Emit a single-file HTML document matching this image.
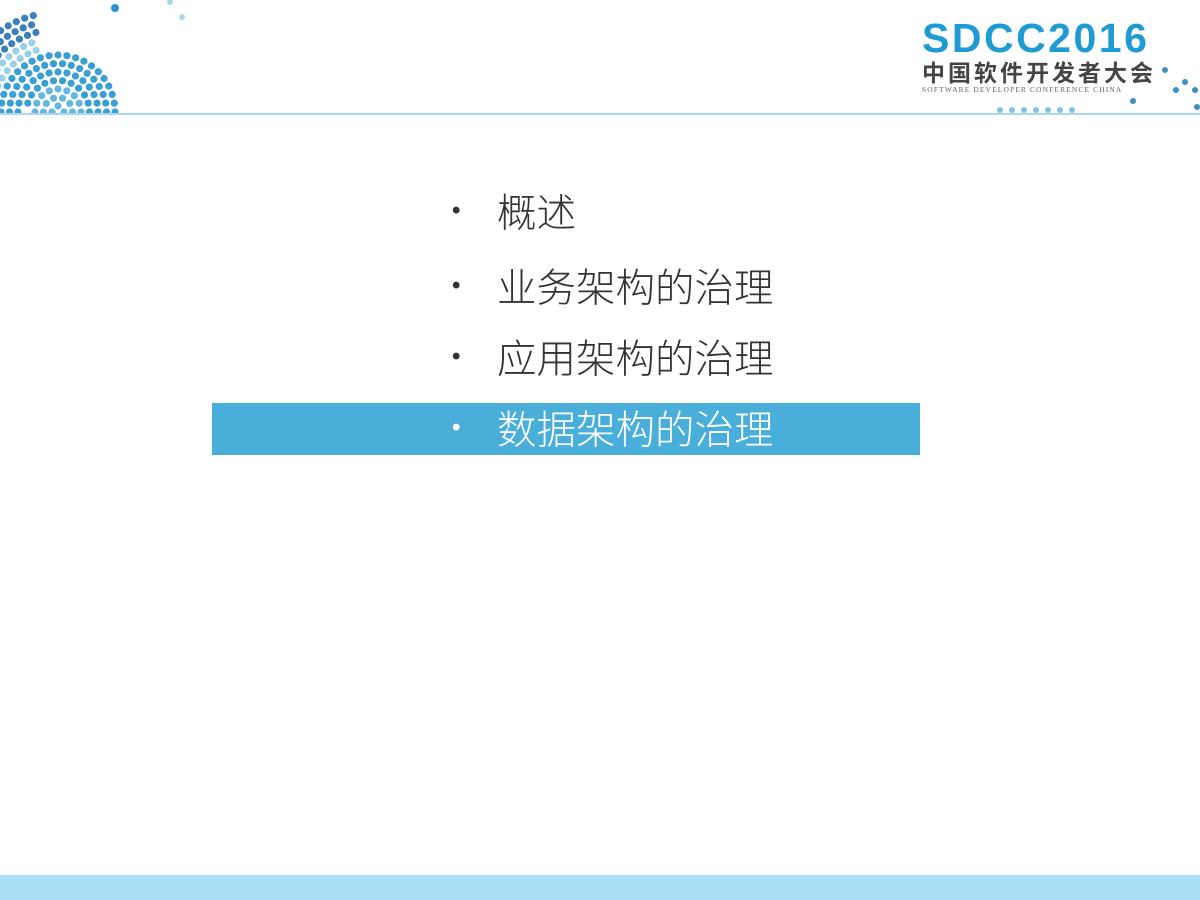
<!DOCTYPE html>
<html><head><meta charset="utf-8"><style>
body{margin:0;width:1200px;height:900px;background:#fff;position:relative;overflow:hidden;font-family:"Liberation Sans","Noto Sans CJK SC",sans-serif}
.line{position:absolute;left:0;top:113px;width:1200px;height:2px;background:#a9d8f0}
.bot{position:absolute;left:0;top:875px;width:1200px;height:25px;background:#a9dcf5}
.hl{position:absolute;left:212px;top:403px;width:708px;height:52px;background:#4aaedb}
.item{position:absolute;left:497px;font-size:39.5px;color:#333;line-height:44px;font-family:"Noto Sans CJK SC",sans-serif;font-weight:300}
.item::before{content:"•";position:absolute;left:-45px;font-size:24px;font-weight:bold;font-family:"Liberation Sans",sans-serif}
.logo{position:absolute;left:922px;top:16px;font-weight:bold;font-size:41px;line-height:44px;color:#1e9bd3;letter-spacing:2.5px}
.cn{position:absolute;left:922px;top:57px;font-size:23px;line-height:28px;font-weight:bold;color:#444;letter-spacing:3px;font-family:"Noto Sans CJK SC",sans-serif}
.en{position:absolute;left:922px;top:85px;font-size:7.5px;line-height:9px;color:#666;font-family:"Liberation Serif",serif;letter-spacing:1.1px;white-space:nowrap}
</style></head><body>
<svg id="dots" width="200" height="115" style="position:absolute;left:0;top:0"></svg>
<svg width="1200" height="115" style="position:absolute;left:0;top:0">
<g fill="#7fc3e6">
<circle cx="1000" cy="110" r="3"/><circle cx="1012" cy="110" r="3"/><circle cx="1024" cy="110" r="3"/><circle cx="1036" cy="110" r="3"/><circle cx="1048" cy="110" r="3"/><circle cx="1060" cy="110" r="3"/><circle cx="1072" cy="110" r="3"/>
</g>
<g fill="#3c8fc4"><circle cx="1165" cy="70" r="3"/><circle cx="1185" cy="82" r="3"/><circle cx="1195" cy="90" r="3"/><circle cx="1176" cy="90" r="3"/><circle cx="1133" cy="101" r="3"/><circle cx="1197" cy="107" r="3"/></g>
<circle cx="115" cy="8" r="4" fill="#2a94cc"/><circle cx="182" cy="17" r="3" fill="#a8d8e6"/><circle cx="170" cy="2" r="3" fill="#a8d8e6"/>
</svg>
<div class="line"></div>
<div class="logo">SDCC2016</div>
<div class="cn">中国软件开发者大会</div>
<div class="en">SOFTWARE DEVELOPER CONFERENCE CHINA</div>
<div class="hl"></div>
<div class="item" style="top:189px">概述</div>
<div class="item" style="top:264px">业务架构的治理</div>
<div class="item" style="top:335px">应用架构的治理</div>
<div class="item" style="top:406px;color:#fff">数据架构的治理</div>
<div class="bot"></div>
<script>
var s=document.getElementById('dots'),h='';
var cx=58,cy=112;
for(var r=6;r<=100;r+=8.5){var n=Math.round(2*Math.PI*r/9);for(var i=0;i<n;i++){var a=2*Math.PI*i/n;var x=cx+r*Math.cos(a),y=cy+r*Math.sin(a);
if(y>112||x<-4)continue;if(r>62&&!(x<40))continue;
var c=r<30?'#66b6df':r<62?'#3a9fd3':(r<80?'#9bd1e6':'#3d7fb8');
h+='<circle cx="'+x.toFixed(1)+'" cy="'+y.toFixed(1)+'" r="3.6" fill="'+c+'"/>';}}
s.innerHTML=h;
</script>
</body></html>
